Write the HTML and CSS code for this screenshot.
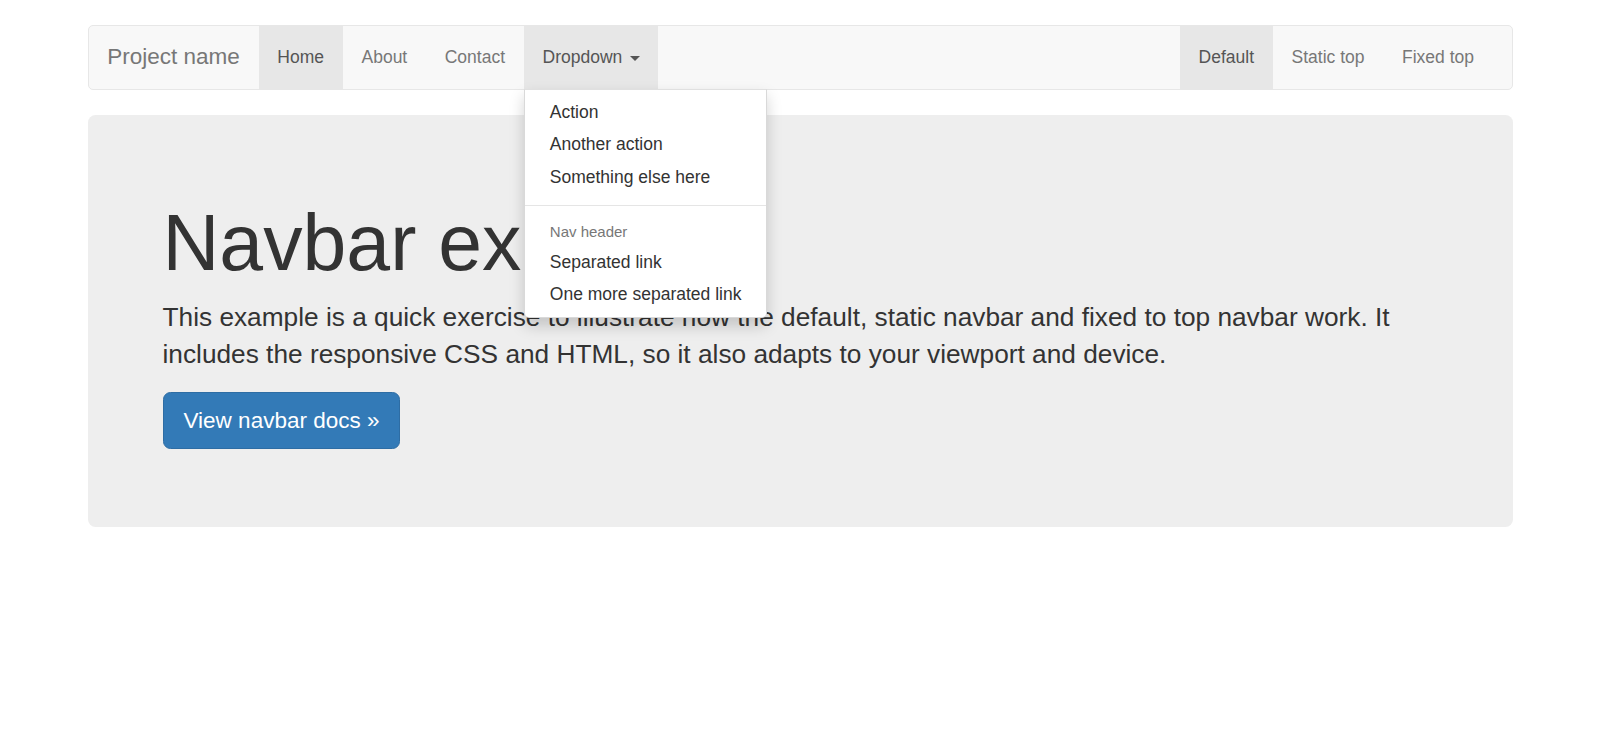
FILE: index.html
```html
<!DOCTYPE html>
<html lang="en">
<head>
<meta charset="utf-8">
<title>Navbar Template</title>
<link rel="stylesheet" href="styles.css">
</head>
<body>
<div class="container">
  <nav class="navbar">
    <a class="navbar-brand" href="#">Project name</a>
    <ul class="nav">
      <li class="active"><a href="#">Home</a></li>
      <li><a href="#">About</a></li>
      <li><a href="#">Contact</a></li>
      <li class="dropdown open">
        <a href="#">Dropdown <span class="caret"></span></a>
        <ul class="dropdown-menu">
          <li><a href="#">Action</a></li>
          <li><a href="#">Another action</a></li>
          <li><a href="#">Something else here</a></li>
          <li class="divider"></li>
          <li class="dropdown-header">Nav header</li>
          <li><a href="#">Separated link</a></li>
          <li><a href="#">One more separated link</a></li>
        </ul>
      </li>
    </ul>
    <ul class="nav nav-right">
      <li class="active"><a href="#">Default</a></li>
      <li><a href="#">Static top</a></li>
      <li><a href="#">Fixed top</a></li>
    </ul>
  </nav>

  <div class="jumbotron">
    <h1>Navbar example</h1>
    <p class="lead">This example is a quick exercise to illustrate how the default, static navbar and fixed to top navbar work. It includes the responsive CSS and HTML, so it also adapts to your viewport and device.</p>
    <p class="lead"><a class="btn" href="#">View navbar docs &raquo;</a></p>
  </div>
</div>
</body>
</html>
```

FILE: styles.css
```css
* { box-sizing: border-box; }

html, body { margin: 0; }

body {
  padding: 25px 0;
  font-family: "Liberation Sans", Arial, Helvetica, sans-serif;
  font-size: 17.5px;
  line-height: 25px;
  color: #333;
  background: #fff;
}

a { text-decoration: none; }

.container {
  width: 1425px;
  margin: 0 auto;
}

/* Navbar */
.navbar {
  display: flex;
  align-items: stretch;
  min-height: 62.5px;
  margin-bottom: 25px;
  padding: 0 18.75px;
  background: #f8f8f8;
  border: 1px solid #e7e7e7;
  border-radius: 5px;
}

.navbar-brand {
  display: block;
  margin-left: -18.75px;
  padding: 18px 18.75px 19.5px;
  height: 62.5px;
  font-size: 22.5px;
  line-height: 25px;
  color: #777;
}

.nav {
  display: flex;
  margin: 0;
  padding: 0;
  list-style: none;
}

.nav > li { position: relative; }

.nav > li > a {
  display: block;
  padding: 18.75px;
  line-height: 25px;
  color: #777;
}

.nav > li.active > a,
.nav > li.open > a {
  color: #555;
  background: #e7e7e7;
}

.nav-right {
  margin-left: auto;
}

.caret {
  display: inline-block;
  width: 0;
  height: 0;
  margin-left: 2.5px;
  vertical-align: middle;
  border-top: 5px solid;
  border-left: 5px solid transparent;
  border-right: 5px solid transparent;
}

/* Dropdown */
.dropdown-menu {
  position: absolute;
  top: 100%;
  left: 0;
  z-index: 1000;
  min-width: 200px;
  margin: 0;
  padding: 6.25px 0;
  list-style: none;
  background: #fff;
  border: 1px solid rgba(0, 0, 0, .15);
  border-top-color: rgba(0, 0, 0, .12);
  border-radius: 0 0 5px 5px;
  box-shadow: 0 7.5px 15px rgba(0, 0, 0, .175);
  white-space: nowrap;
}

.dropdown-menu > li > a {
  display: block;
  padding: 3.75px 25px;
  line-height: 25px;
  color: #333;
}

.dropdown-menu .divider {
  height: 1px;
  margin: 11.25px 0;
  background: #e5e5e5;
}

.dropdown-header {
  padding: 3.75px 25px;
  font-size: 15px;
  line-height: 21.5px;
  color: #777;
}

/* Jumbotron */
.jumbotron {
  padding: 60px 75px;
  margin-bottom: 37.5px;
  background: #eee;
  border-radius: 7.5px;
}

.jumbotron h1 {
  margin: 25px 0 12.5px;
  font-size: 78.75px;
  line-height: 1.1;
  font-weight: 500;
  color: inherit;
}

.jumbotron .lead {
  margin: 0 0 18.75px;
  font-size: 26.25px;
  line-height: 37.5px;
  font-weight: 200;
}

.jumbotron .lead:last-child {
  margin-bottom: 17.5px;
}

.btn {
  display: inline-block;
  padding: 12.5px 20px;
  font-size: 22.5px;
  line-height: 30px;
  color: #fff;
  background: #337ab7;
  border: 1px solid #2e6da4;
  border-radius: 7.5px;
  vertical-align: middle;
}
```
